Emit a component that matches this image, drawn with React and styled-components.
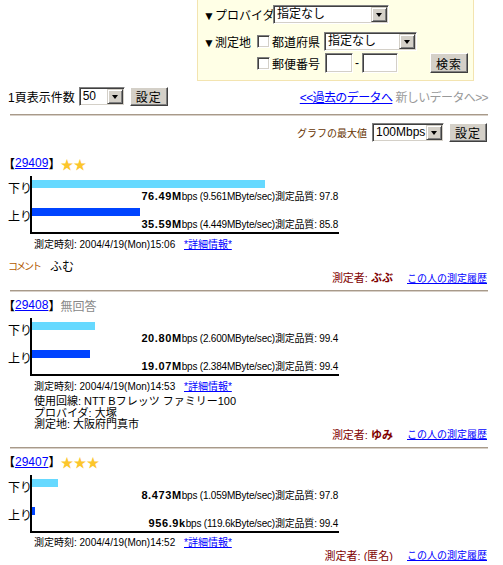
import React from "react";
import styled, { createGlobalStyle } from "styled-components";

const GlobalStyle = createGlobalStyle`
  html, body {
    margin: 0;
    padding: 0;
    background: #fff;
    overflow: hidden;
  }
  body {
    font-family: "Liberation Sans", "Noto Sans CJK JP", sans-serif;
    font-size: 12px;
    color: #000;
  }
`;

const Page = styled.div`
  width: 480px;
  margin-left: 8px;
  display: flex;
  flex-direction: column;
`;

/* ---- classic form controls ---- */

const Sunken = styled.div`
  display: inline-flex;
  align-items: stretch;
  box-sizing: border-box;
  width: ${p => p.$w}px;
  height: ${p => p.$h || 19}px;
  padding: 1px;
  background: #fff;
  border: 1px solid;
  border-color: #808080 #fff #fff #808080;
  box-shadow: inset 1px 1px 0 #404040, inset -1px -1px 0 #d4d0c8;
  margin-left: ${p => p.$ml || 0}px;
  flex-shrink: 0;
`;

const SelectText = styled.span`
  flex: 1;
  padding-left: 2px;
  line-height: 15px;
  font-size: 12px;
  white-space: nowrap;
`;

const DropButton = styled.span`
  width: 16px;
  box-sizing: border-box;
  background: #d4d0c8;
  border: 1px solid;
  border-color: #d4d0c8 #404040 #404040 #d4d0c8;
  box-shadow: inset 1px 1px 0 #fff, inset -1px -1px 0 #808080;
  display: flex;
  align-items: center;
  justify-content: center;
  &::after {
    content: "";
    width: 0;
    height: 0;
    border-left: 3.5px solid transparent;
    border-right: 3.5px solid transparent;
    border-top: 4px solid #000;
  }
`;

const Select = ({ w, ml, children }) => (
  <Sunken $w={w} $ml={ml}>
    <SelectText>{children}</SelectText>
    <DropButton />
  </Sunken>
);

const Check = styled.span`
  display: inline-block;
  box-sizing: border-box;
  width: 13px;
  height: 13px;
  background: #fff;
  border: 1px solid;
  border-color: #808080 #fff #fff #808080;
  box-shadow: inset 1px 1px 0 #404040, inset -1px -1px 0 #d4d0c8;
  flex-shrink: 0;
`;

const Button = styled.button`
  box-sizing: border-box;
  width: 38px;
  height: ${p => p.$h || 19}px;
  margin-left: ${p => p.$ml || 0}px;
  padding: 0;
  font-family: "Liberation Sans", "Noto Sans CJK JP", sans-serif;
  font-size: 12px;
  letter-spacing: 1px;
  color: #000;
  background: #d4d0c8;
  border: 1px solid;
  border-color: #fff #404040 #404040 #fff;
  box-shadow: inset -1px -1px 0 #808080;
  flex-shrink: 0;
`;

/* ---- search box ---- */

const FilterBox = styled.div`
  margin-left: 189px;
  width: 277px;
  height: 81px;
  box-sizing: border-box;
  padding: 5px 0 0 5px;
  background: #ffffe6;
  border: 1px solid #f3e4b0;
  border-top: none;
  display: flex;
  flex-direction: column;
`;

const FilterRow = styled.div`
  display: flex;
  align-items: center;
  height: ${p => p.$h || 19}px;
  margin-top: ${p => p.$gap || 0}px;
`;

const FilterLabel = styled.span`
  width: ${p => p.$w}px;
  white-space: nowrap;
  flex-shrink: 0;
`;

const FieldName = styled.span`
  margin-left: 2px;
  white-space: nowrap;
`;

const Dash = styled.span`
  margin: 0 3px 0 2px;
`;

/* ---- pager / graph setting ---- */

const PagerRow = styled.div`
  display: flex;
  align-items: center;
  justify-content: space-between;
  height: 19px;
  margin-top: 6px;
`;

const Group = styled.div`
  display: flex;
  align-items: center;
  letter-spacing: ${p => (p.$tight ? "-0.6px" : "0")};
`;

const Link = styled.a`
  color: #0000ff;
  text-decoration: underline;
  cursor: pointer;
  font-size: ${p => p.$size || 12}px;
`;

const Muted = styled.span`
  color: #999;
  margin-left: 3px;
`;

const Rule = styled.div`
  height: 2px;
  margin-left: 2px;
  width: 478px;
  background: #a89a8a;
  border-bottom: 1px solid #d8d0c8;
  box-sizing: border-box;
  margin-top: ${p => p.$mt || 0}px;
`;

const GraphRow = styled.div`
  display: flex;
  align-items: center;
  justify-content: flex-end;
  height: 19px;
  margin: 7px 1px 8px 0;
`;

const GraphLabel = styled.span`
  color: #663300;
  font-size: 10px;
`;

/* ---- entries ---- */

const Entry = styled.div`
  display: flex;
  flex-direction: column;
`;

const Head = styled.div`
  display: flex;
  align-items: center;
  height: 14px;
  margin-top: 6px;
`;

const Bracket = styled.span`
  font-weight: bold;
  white-space: nowrap;
  margin-left: ${p => (p.$open ? "-5px" : "0")};
  margin-right: ${p => (p.$open ? "0" : "-5px")};
`;

const Stars = styled.span`
  margin-left: 5px;
  color: #fcc62c;
  font-family: "Noto Sans CJK JP", sans-serif;
  font-size: 13px;
`;

const NoAnswer = styled.span`
  margin-left: 5px;
  color: #888;
`;

const Chart = styled.div`
  display: flex;
  margin-top: 6px;
`;

const LabelCol = styled.div`
  width: 22px;
  flex-shrink: 0;
`;

const AxisLabel = styled.div`
  height: 28px;
  box-sizing: border-box;
  padding-top: 7px;
  margin-right: -2px;
  line-height: 12px;
  text-align: right;
  white-space: nowrap;
`;

const Plot = styled.div`
  width: 307px;
  border-left: 2px solid #000;
  border-bottom: 2px solid #000;
`;

const Lane = styled.div`
  height: 28px;
  box-sizing: border-box;
  padding-top: 4px;
`;

const Bar = styled.div`
  height: 8px;
  background: ${p => (p.$up ? "#0044ff" : "#66d9ff")};
`;

const Speed = styled.div`
  text-align: right;
  line-height: 16px;
  padding-right: 1px;
  font-size: 10px;
  letter-spacing: -0.2px;
  white-space: nowrap;
`;

const SpeedNum = styled.b`
  font-size: 11px;
  letter-spacing: 0.6px;
`;

const TimeRow = styled.div`
  display: flex;
  align-items: center;
  height: 14px;
  margin-top: 2px;
  padding-left: 26px;
  font-size: 10px;
`;

const TimeText = styled.span`
  width: 150px;
  white-space: nowrap;
`;

const CommentRow = styled.div`
  display: flex;
  align-items: center;
  height: 12px;
  margin-top: 9px;
`;

const CommentTag = styled.span`
  color: #b35a00;
  font-size: 10px;
  letter-spacing: -2px;
  margin-right: 10px;
`;

const Info = styled.div`
  padding-left: 26px;
  margin-top: 4px;
  font-size: 11px;
  line-height: 11.5px;
`;

const Footer = styled.div`
  display: flex;
  align-items: center;
  justify-content: flex-end;
  gap: 14px;
  height: 12px;
  margin-top: ${p => p.$mt || 0}px;
  margin-right: 1px;
`;

const Tester = styled.span`
  color: #800000;
  font-size: 11px;
  b {
    font-weight: bold;
  }
`;

const entries = [
  {
    id: 29409,
    stars: 2,
    down: { v: 76.49, n: "76.49", u: "M", b: "9.561MByte/sec", q: "97.8" },
    up: { v: 35.59, n: "35.59", u: "M", b: "4.449MByte/sec", q: "85.8" },
    time: "2004/4/19(Mon)15:06",
    comment: "ふむ",
    user: "ぶぶ",
    bold: true
  },
  {
    id: 29408,
    stars: 0,
    down: { v: 20.8, n: "20.80", u: "M", b: "2.600MByte/sec", q: "99.4" },
    up: { v: 19.07, n: "19.07", u: "M", b: "2.384MByte/sec", q: "99.4" },
    time: "2004/4/19(Mon)14:53",
    info: ["使用回線: NTT Bフレッツ ファミリー100", "プロバイダ: 大塚", "測定地: 大阪府門真市"],
    user: "ゆみ",
    bold: true
  },
  {
    id: 29407,
    stars: 3,
    down: { v: 8.473, n: "8.473", u: "M", b: "1.059MByte/sec", q: "97.8" },
    up: { v: 0.9569, n: "956.9", u: "k", b: "119.6kByte/sec", q: "99.4" },
    time: "2004/4/19(Mon)14:52",
    user: "(匿名)",
    bold: false
  }
];

const barWidth = mbps => Math.max(2, Math.round(mbps * 3.04));

const SpeedLane = ({ s, up }) => (
  <Lane>
    <Bar $up={up} style={{ width: barWidth(s.v) }} />
    <Speed>
      <SpeedNum>
        {s.n}
        {s.u}
      </SpeedNum>
      bps ({s.b})測定品質: {s.q}
    </Speed>
  </Lane>
);

const EntryView = ({ e, last }) => {
  let footerGap = 0;
  if (e.info) footerGap = -3;
  return (
    <Entry>
      <Head>
        <Bracket $open>【</Bracket>
        <Link>{e.id}</Link>
        <Bracket>】</Bracket>
        {e.stars > 0 ? <Stars>{"★".repeat(e.stars)}</Stars> : <NoAnswer>無回答</NoAnswer>}
      </Head>
      <Chart>
        <LabelCol>
          <AxisLabel>下り</AxisLabel>
          <AxisLabel>上り</AxisLabel>
        </LabelCol>
        <Plot>
          <SpeedLane s={e.down} />
          <SpeedLane s={e.up} up />
        </Plot>
      </Chart>
      <TimeRow>
        <TimeText>測定時刻: {e.time}</TimeText>
        <Link $size={10}>*詳細情報*</Link>
      </TimeRow>
      {e.comment && (
        <CommentRow>
          <CommentTag>コメント</CommentTag>
          {e.comment}
        </CommentRow>
      )}
      {e.info && (
        <Info>
          {e.info.map(line => (
            <div key={line}>{line}</div>
          ))}
        </Info>
      )}
      <Footer $mt={footerGap}>
        <Tester>
          測定者: {e.bold ? <b>{e.user}</b> : e.user}
        </Tester>
        <Link $size={10}>この人の測定履歴</Link>
      </Footer>
      {!last && <Rule $mt={7} />}
    </Entry>
  );
};

export default function App() {
  return (
    <>
      <GlobalStyle />
      <Page>
        <FilterBox>
          <FilterRow>
            <FilterLabel $w={70}>▼プロバイダ</FilterLabel>
            <Select w={116}>指定なし</Select>
          </FilterRow>
          <FilterRow $gap={8}>
            <FilterLabel $w={54}>▼測定地</FilterLabel>
            <Check />
            <FieldName>都道府県</FieldName>
            <Select w={93} ml={4}>
              指定なし
            </Select>
          </FilterRow>
          <FilterRow $gap={2} $h={20}>
            <FilterLabel $w={54} />
            <Check />
            <FieldName>郵便番号</FieldName>
            <Sunken $w={28} $h={20} $ml={5} />
            <Dash>-</Dash>
            <Sunken $w={36} $h={20} />
            <Button $h={20} $ml={32}>
              検索
            </Button>
          </FilterRow>
        </FilterBox>

        <PagerRow>
          <Group>
            1頁表示件数
            <Select w={46} ml={4}>
              50
            </Select>
            <Button $ml={5}>設定</Button>
          </Group>
          <Group $tight>
            <Link>&lt;&lt;過去のデータへ</Link>
            <Muted>新しいデータへ&gt;&gt;</Muted>
          </Group>
        </PagerRow>

        <Rule $mt={8} />

        <GraphRow>
          <GraphLabel>グラフの最大値</GraphLabel>
          <Select w={72} ml={5}>
            100Mbps
          </Select>
          <Button $ml={5}>設定</Button>
        </GraphRow>

        {entries.map((e, i) => (
          <EntryView key={e.id} e={e} last={i === entries.length - 1} />
        ))}
      </Page>
    </>
  );
}
